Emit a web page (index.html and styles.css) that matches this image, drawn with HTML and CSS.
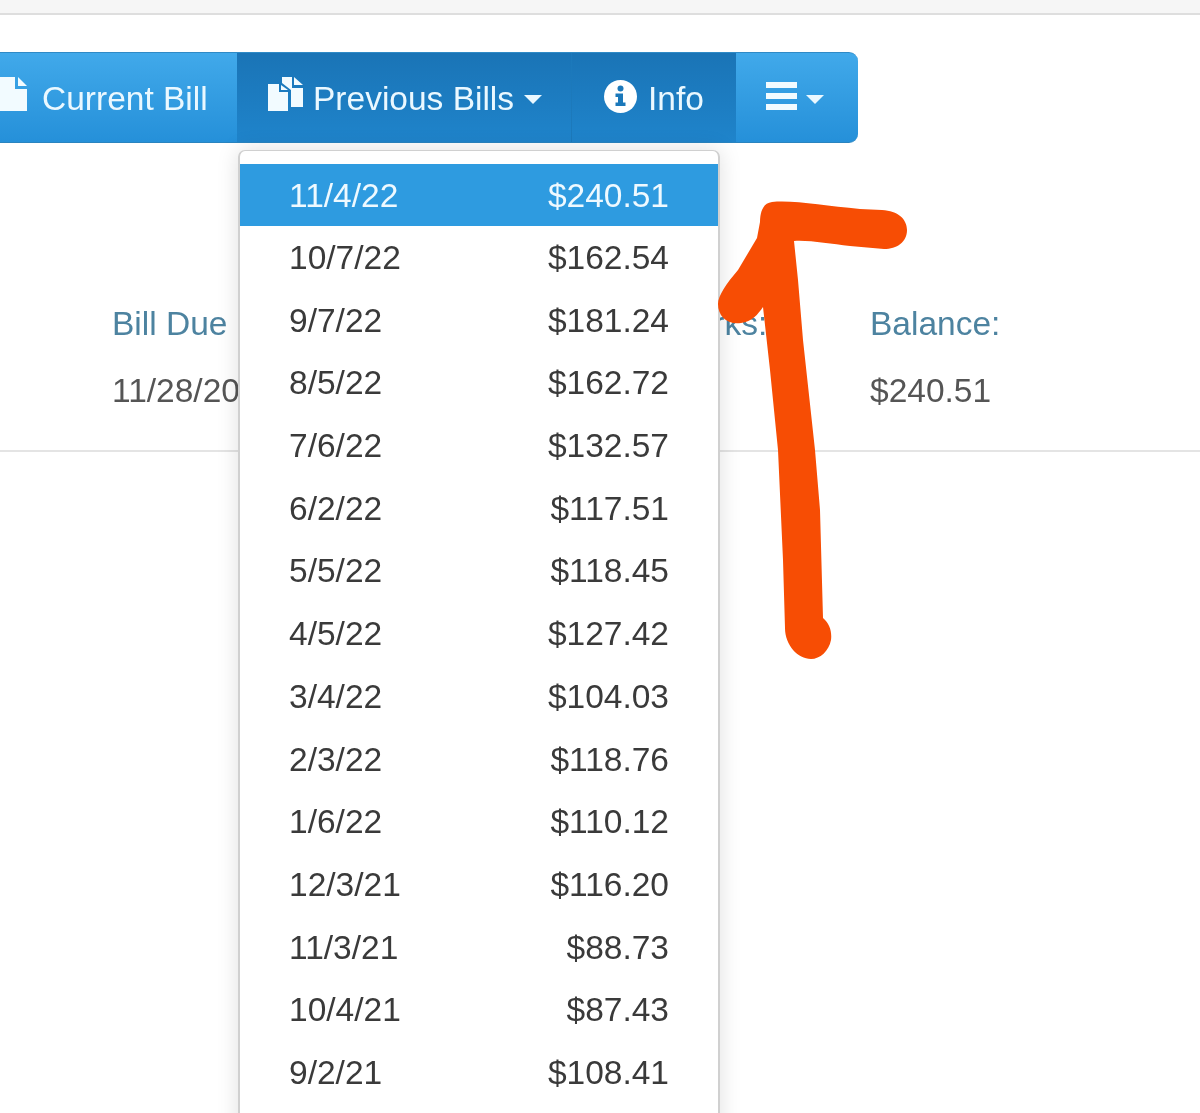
FILE: index.html
```html
<!DOCTYPE html>
<html lang="en">
<head>
<meta charset="utf-8">
<title>Bills</title>
<link rel="stylesheet" href="styles.css">
</head>
<body>
<div class="page">
  <div class="topstrip"></div>
  <nav class="toolbar">
    <div class="tab tab-current">
      <svg class="ico ico-file" viewBox="0 0 27 34"><path d="M0 0H15V12H27V34H0Z"/><path d="M18 0L27 9H18Z"/></svg>
      <span class="tab-text">Current Bill</span>
    </div>
    <div class="tab tab-prev active">
      <svg class="ico ico-files" viewBox="0 0 35 34"><path d="M0 7H11V15H20V34H0Z"/><path d="M13 8L20 13H13Z"/><path d="M14 0H24V11H35V30H23V13L14 6Z"/><path d="M26 0L35 8H26Z"/></svg>
      <span class="tab-text">Previous Bills</span>
      <i class="caret"></i>
      <div class="menu">
        <div class="row selected"><span>11/4/22</span><span>$240.51</span></div>
        <div class="row"><span>10/7/22</span><span>$162.54</span></div>
        <div class="row"><span>9/7/22</span><span>$181.24</span></div>
        <div class="row"><span>8/5/22</span><span>$162.72</span></div>
        <div class="row"><span>7/6/22</span><span>$132.57</span></div>
        <div class="row"><span>6/2/22</span><span>$117.51</span></div>
        <div class="row"><span>5/5/22</span><span>$118.45</span></div>
        <div class="row"><span>4/5/22</span><span>$127.42</span></div>
        <div class="row"><span>3/4/22</span><span>$104.03</span></div>
        <div class="row"><span>2/3/22</span><span>$118.76</span></div>
        <div class="row"><span>1/6/22</span><span>$110.12</span></div>
        <div class="row"><span>12/3/21</span><span>$116.20</span></div>
        <div class="row"><span>11/3/21</span><span>$88.73</span></div>
        <div class="row"><span>10/4/21</span><span>$87.43</span></div>
        <div class="row"><span>9/2/21</span><span>$108.41</span></div>
      </div>
    </div>
    <div class="tab tab-info active">
      <svg class="ico ico-info" viewBox="0 0 33 33"><circle cx="16.5" cy="16.5" r="16.5" fill="#fff"/><circle cx="16.5" cy="8.5" r="3" class="cut"/><path class="cut" d="M11.5 13.5H19V22.5H21.5V26H11.5V22.5H14V17H11.5Z"/></svg>
      <span class="tab-text">Info</span>
    </div>
    <div class="tab tab-more">
      <svg class="ico ico-bars" viewBox="0 0 31 28"><path d="M0 0H31V6H0ZM0 11H31V17H0ZM0 22H31V28H0Z"/></svg>
      <i class="caret"></i>
    </div>
  </nav>
  <section class="summary">
    <div class="col">
      <div class="label">Bill Due Date:</div>
      <div class="value">11/28/2022</div>
    </div>
    <div class="col">
      <div class="label">Remarks:</div>
    </div>
    <div class="col">
      <div class="label">Balance:</div>
      <div class="value">$240.51</div>
    </div>
  </section>
  <svg class="scribble" viewBox="0 0 1200 1113" width="1200" height="1113"><path d="M772 202C795 200 825 206 860 209L882 210C898 211 907 219 907 230C907 242 897 249 884 249L850 246C830 244 810 240 794 241L798 280L803 340L815 450L820 510L823 618C830 624 832 632 831 640C829 651 820 659 811 659C798 659 785 645 785 628L783 560L778 450L770 370L763 307C758 314 752 322 741 323C727 325 718 316 718 304C718 296 726 284 738 270L757 238L760 222C760 210 764 203 772 202Z"/></svg>
</div>
</body>
</html>
```
FILE: styles.css
```css
html, body {
  margin: 0;
  padding: 0;
  height: 1113px;
  overflow: hidden;
  background: #fff;
}
.page {
  position: relative;
  height: 1113px;
  overflow: hidden;
  font-family: "Liberation Sans", Arial, sans-serif;
  font-size: 33.5px;
  color: #444;
  filter: blur(0.5px);
}
.topstrip {
  height: 15px;
  box-sizing: border-box;
  background: #f6f6f6;
  border-bottom: 2px solid #dedede;
}
.toolbar {
  display: flex;
  width: 888px;
  height: 91px;
  margin: 37px 0 0 -30px;
  box-sizing: border-box;
  border-radius: 0 9px 9px 0;
  color: #eaf8ff;
  background: linear-gradient(#41a9ea, #2590d9);
  border-top: 1px solid #2f8ac6;
  border-bottom: 1px solid #2a84bf;
}
.tab {
  display: flex;
  align-items: center;
  height: 100%;
  box-sizing: border-box;
  position: relative;
}
.tab.active {
  background: linear-gradient(#1a74b6, #1f84cb);
}
.tab-text { padding-top: 2px; }
.tab-current { width: 267px; padding-left: 30px; gap: 15px; }
.tab-prev { width: 335px; padding-left: 31px; gap: 10px; border-right: 1px solid #1c79bb; }
.tab-info { width: 164px; padding-left: 32px; gap: 11px; }
.tab-more { width: 122px; padding-left: 30px; gap: 9px; }
.ico { display: block; flex: none; fill: #f2fbff; }
.ico-file { width: 27px; height: 34px; margin-top: -7px; }
.ico-files { width: 35px; height: 34px; margin-top: -7px; }
.ico-info { width: 33px; height: 33px; margin-top: -3px; }
.ico-info .cut { fill: #1b78ba; }
.ico-bars { width: 31px; height: 28px; margin-top: -4px; }
.caret {
  width: 0;
  height: 0;
  border-left: 9px solid transparent;
  border-right: 9px solid transparent;
  border-top: 9px solid #eaf8ff;
  margin-top: 3px;
}
.menu {
  position: absolute;
  top: 97px;
  left: 1px;
  width: 482px;
  box-sizing: border-box;
  padding: 13px 0 60px;
  background: #fff;
  border: 1px solid #d0d0d0;
  border-width: 1px 2px;
  border-radius: 7px 7px 0 0;
  box-shadow: 0 0 22px rgba(0, 0, 0, .13);
  color: #3a3a3a;
  z-index: 2;
}
.row {
  display: flex;
  justify-content: space-between;
  align-items: center;
  height: 62.7px;
  padding: 0 49px;
  box-sizing: border-box;
}
.row.selected {
  height: 62px;
  margin-bottom: 0.7px;
  padding-top: 1px;
  background: #2e9be0;
  color: #eef9ff;
}
.summary {
  display: grid;
  grid-template-columns: 512px 246px auto;
  padding: 158px 0 36px 112px;
  border-bottom: 2px solid #e4e4e4;
  line-height: 46px;
}
.label { color: #4d83a0; margin-bottom: 21px; }
.value { color: #555; }
.scribble {
  position: absolute;
  top: 0;
  left: 0;
  z-index: 3;
  fill: #f74d04;
}
```
